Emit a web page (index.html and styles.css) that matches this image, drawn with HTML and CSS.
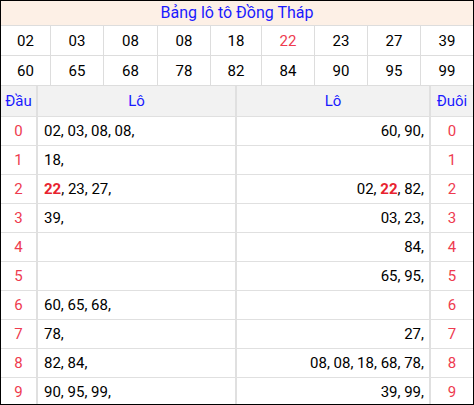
FILE: index.html
```html
<!DOCTYPE html>
<html lang="vi">
<head>
<meta charset="utf-8">
<title>Bảng lô tô Đồng Tháp</title>
<link rel="stylesheet" href="styles.css">
</head>
<body>
<div class="board">
  <div class="title">Bảng lô tô Đồng Tháp</div>
  <div class="nums">
    <div class="n">02</div><div class="n">03</div><div class="n">08</div><div class="n">08</div><div class="n">18</div><div class="n hot">22</div><div class="n">23</div><div class="n">27</div><div class="n">39</div>
    <div class="n">60</div><div class="n">65</div><div class="n">68</div><div class="n">78</div><div class="n">82</div><div class="n">84</div><div class="n">90</div><div class="n">95</div><div class="n">99</div>
  </div>
  <div class="lt">
    <div class="h">Đầu</div><div class="h">Lô</div><div class="h">Lô</div><div class="h">Đuôi</div>

    <div class="d">0</div><div class="l"><span>02, 03, 08, 08,</span></div><div class="r"><span>60, 90,</span></div><div class="d">0</div>
    <div class="d">1</div><div class="l"><span>18,</span></div><div class="r"></div><div class="d">1</div>
    <div class="d">2</div><div class="l"><span><b>22</b>, 23, 27,</span></div><div class="r"><span>02, <b>22</b>, 82,</span></div><div class="d">2</div>
    <div class="d">3</div><div class="l"><span>39,</span></div><div class="r"><span>03, 23,</span></div><div class="d">3</div>
    <div class="d">4</div><div class="l"></div><div class="r"><span>84,</span></div><div class="d">4</div>
    <div class="d">5</div><div class="l"></div><div class="r"><span>65, 95,</span></div><div class="d">5</div>
    <div class="d">6</div><div class="l"><span>60, 65, 68,</span></div><div class="r"></div><div class="d">6</div>
    <div class="d">7</div><div class="l"><span>78,</span></div><div class="r"><span>27,</span></div><div class="d">7</div>
    <div class="d">8</div><div class="l"><span>82, 84,</span></div><div class="r"><span>08, 08, 18, 68, 78,</span></div><div class="d">8</div>
    <div class="d">9</div><div class="l"><span>90, 95, 99,</span></div><div class="r"><span>39, 99,</span></div><div class="d">9</div>
  </div>
</div>
</body>
</html>
```

FILE: styles.css
```css
html, body {
  margin: 0;
  padding: 0;
  background: #fff;
}

.board {
  width: 474px;
  height: 405px;
  box-sizing: border-box;
  border: 1px solid #000;
  overflow: hidden;
  font-family: Roboto, "Liberation Sans", sans-serif;
  font-size: 15px;
  color: #000;
  background: #fff;
}

.title {
  height: 24px;
  line-height: 24px;
  text-align: center;
  font-size: 16px;
  background: #fdf0e6;
  color: #1a1aff;
  border-bottom: 1px solid #ddd;
}

.nums {
  display: grid;
  grid-template-columns: 49px 52px 53px 52px 50px 52px 52px 52px 1fr;
  grid-auto-rows: 29px;
  gap: 1px;
  background: #ddd;
  border-bottom: 1px solid #ddd;
}

.n {
  background: #fff;
  display: flex;
  align-items: center;
  justify-content: center;
}

.n.hot {
  color: #ee3b4f;
}

.lt {
  display: grid;
  grid-template-columns: 35px 197px 192px 1fr;
  grid-template-rows: 30px;
  grid-auto-rows: 28px;
  column-gap: 2px;
  row-gap: 1px;
  background: #e0e0e0;
}

.lt > div {
  display: flex;
  align-items: center;
  background: #fff;
}

.lt > .h {
  background: #f2f2f2;
  color: #1a1aff;
  justify-content: center;
}

.lt > .d {
  justify-content: center;
  color: #ee3b4f;
}

.lt > .l {
  padding-left: 6px;
}

.lt > .r {
  justify-content: flex-end;
  padding-right: 5px;
}

.lt b {
  color: #e8232f;
  font-weight: 700;
}
```
